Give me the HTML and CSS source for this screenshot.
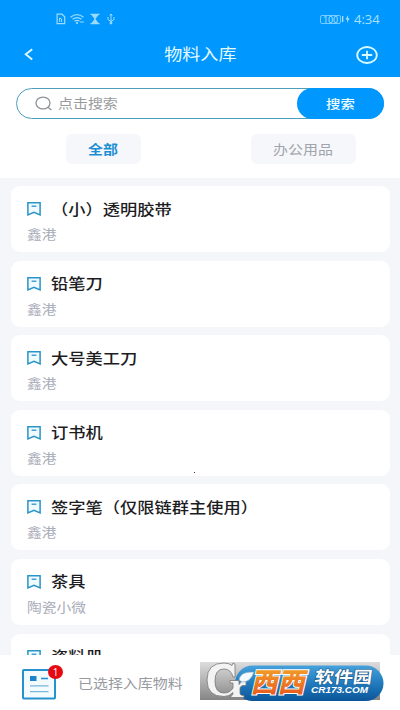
FILE: index.html
```html
<!DOCTYPE html>
<html lang="zh-CN">
<head>
<meta charset="utf-8">
<title>物料入库</title>
<link rel="stylesheet" href="styles.css">
</head>
<body>
<svg class="defs" width="0" height="0" aria-hidden="true">
  <symbol id="bookmark" viewBox="0 0 14 14"><path d="M.9.8h12.2v12.1L7 10.2.9 12.9z" fill="#f0faff" stroke="#2795c8" stroke-width="1.5"/><path d="M4.6 4.2h4.8" stroke="#2795c8" stroke-width="1.3"/></symbol>
</svg>
<div class="app">
  <header class="top">
    <div class="status">
      <svg class="status-icons" width="62" height="12" viewBox="0 0 62 12" fill="none" stroke="#9bdcff">
        <path d="M1.1 1.2h5l2.6 2.5v7H1.1z" stroke-width="1.2"/><path d="M3.6 9V5l2 1v3"/>
        <path d="M14.5 4.2q6.5-5 13 0M16.5 6.3q4.6-3.4 9 0M18.5 8.3q2.6-1.8 5 0" stroke-width="1.2"/><circle cx="21" cy="10" r=".7" fill="#9bdcff"/><path d="M24 9h4"/>
        <path d="M34.5 1.4h9M34.5 10.6h9" stroke-width="1.2"/><path d="M36 2h6l-3 4zM39 6l3 4h-6z" fill="#9bdcff" stroke-width=".8"/>
        <path d="M55 1v10M52 4v2.5l3 2 3-2V4"/><path d="M53.8 2.5 55 1l1.2 1.5"/><circle cx="55" cy="10" r="1" fill="#9bdcff"/>
      </svg>
      <div class="status-right">
        <span class="battery">100</span>
        <svg width="8" height="10" viewBox="0 0 8 10" fill="#a8e1ff"><path d="M0 2h1.3v6H0zM6.2 1 3.5 5.6h1.8L5 9l2.6-4.7H5.9z"/></svg>
        <span class="clock">4:34</span>
      </div>
    </div>
    <div class="nav">
      <svg width="10" height="13" viewBox="0 0 10 13"><path d="M8.2 1.2 1.7 6.3l6.5 5.2" fill="none" stroke="#e4fbff" stroke-width="1.8"/></svg>
      <h1><span class="wide">物料入库</span></h1>
      <svg width="22" height="18" viewBox="0 0 22 18" fill="none" stroke="#d9fbff" stroke-width="1.8"><ellipse cx="11" cy="9" rx="9.8" ry="8"/><path d="M5.8 9h10.4M11 4.8v8.4"/></svg>
    </div>
  </header>
  <section class="filters">
    <div class="search">
      <svg width="18" height="15" viewBox="0 0 18 15" fill="none" stroke="#8e9296" stroke-width="1.3"><ellipse cx="8" cy="7" rx="7" ry="5.9"/><path d="m13 11.2 3.4 2.9"/></svg>
      <span class="placeholder"><span class="wide">点击搜索</span></span>
      <button><span class="wide">搜索</span></button>
    </div>
    <div class="tabs">
      <div class="tab active"><span class="wide">全部</span></div>
      <div class="tab"><span class="wide">办公用品</span></div>
    </div>
  </section>
  <main class="list">
    <article class="card"><h2><svg><use href="#bookmark"/></svg><span class="wide">（小）透明胶带</span></h2><p><span class="wide">鑫港</span></p></article>
    <article class="card"><h2><svg><use href="#bookmark"/></svg><span class="wide">铅笔刀</span></h2><p><span class="wide">鑫港</span></p></article>
    <article class="card"><h2><svg><use href="#bookmark"/></svg><span class="wide">大号美工刀</span></h2><p><span class="wide">鑫港</span></p></article>
    <article class="card"><h2><svg><use href="#bookmark"/></svg><span class="wide">订书机</span></h2><p><span class="wide">鑫港</span></p></article>
    <article class="card"><h2><svg><use href="#bookmark"/></svg><span class="wide">签字笔（仅限链群主使用）</span></h2><p><span class="wide">鑫港</span></p></article>
    <article class="card"><h2><svg><use href="#bookmark"/></svg><span class="wide">茶具</span></h2><p><span class="wide">陶瓷小微</span></p></article>
    <article class="card"><h2><svg><use href="#bookmark"/></svg><span class="wide">资料册</span></h2></article>
  </main>
  <footer class="bottom">
    <div class="cart">
      <svg width="34" height="31" viewBox="0 0 34 31" fill="none"><rect x="1" y="1" width="32" height="28.5" rx=".8" fill="#f3fbff" stroke="#2591cd" stroke-width="2"/><path d="M8 7h6.5v5H8z" fill="#1b83cc"/><path d="M19 9.5h7" stroke="#2591cd" stroke-width="1.6"/><path d="M8 16.8h18.5M8 22.7h18.5" stroke="#79b6d8" stroke-width="1.3"/></svg>
      <span class="badge">1</span>
    </div>
    <span class="chosen"><span class="wide">已选择入库物料</span></span>
  </footer>
  <i class="speck"></i>
  <svg class="watermark" width="200" height="50" viewBox="200 660 200 50">
    <defs>
      <linearGradient id="shade" x1="0" y1="0" x2="0" y2="1"><stop offset="0" stop-color="#ddd"/><stop offset="1" stop-color="#858585"/></linearGradient>
      <linearGradient id="pill" x1="0" y1="0" x2="0" y2="1"><stop offset="0" stop-color="#45a2dc"/><stop offset=".5" stop-color="#217bbd"/><stop offset="1" stop-color="#0b559a"/></linearGradient>
      <linearGradient id="tile" x1="0" y1="0" x2="0" y2="1"><stop offset="0" stop-color="#f5b52d"/><stop offset="1" stop-color="#e8501c"/></linearGradient>
    </defs>
    <path d="M200 662h180v38H200z" fill="url(#shade)"/>
    <rect x="235" y="665.5" width="148.5" height="35.5" rx="17.7" fill="url(#pill)"/>
    <path d="M235 664v13h-2q-2-8-9-8-9 0-9 12t9 12q6 0 9-5v-5h-3v-2.500h9v4q3-5 7-4v5q-4-1-6 2v6q0 2 4 2v2h-13v-2q2 0 2-2v-1q-4 4-9 4-17 0-17-16.500 0-17 17-17 5 0 8 2.500l1-2.500z" fill="#f3f3f3" stroke="#777" stroke-width=".8" stroke-linejoin="round"/>
    <path d="M239 680q1-9 15-8-3 10-12 10z" fill="#f4faff" stroke="#6f9fbd" stroke-width=".6"/>
    <text class="xixi" transform="translate(250.500 691.500) skewX(-13)" textLength="54" lengthAdjust="spacingAndGlyphs">西西</text>
    <text class="brand" transform="translate(314 682.500) skewX(-8) scale(1.16 1)">软件园</text>
    <text class="domain" x="311" y="693" textLength="57" lengthAdjust="spacingAndGlyphs">CR173.COM</text>
  </svg>
</div>
</body>
</html>
```
FILE: styles.css
```css
* { box-sizing: border-box; }
body {
  margin: 0;
  font-family: "Noto Sans CJK SC", sans-serif;
  background: #fff;
}
h1, h2, p { margin: 0; }
.defs { position: absolute; }
.app {
  position: relative;
  display: flex;
  flex-direction: column;
  width: 400px;
  height: 710px;
  overflow: hidden;
}
/* Text is drawn slightly wider than tall throughout the app. */
.wide {
  display: inline-block;
  transform: scaleX(1.15);
  transform-origin: left center;
  white-space: nowrap;
}
.top {
  flex: none;
  height: 77px;
  background: #0097ff;
  color: #e4fbff;
}
.status {
  display: flex;
  justify-content: space-between;
  height: 38px;
  padding: 13px 20px 0 56px;
}
.status-right {
  display: flex;
  align-items: center;
  gap: 1px;
  height: 12px;
  color: #a8e1ff;
  font-family: Roboto, sans-serif;
}
.battery {
  width: 21px;
  height: 9px;
  border: 1px solid #78cdff;
  border-radius: 2px;
  font-size: 9px;
  line-height: 8px;
  text-align: center;
}
.clock {
  width: 26px;
  margin-left: 3px;
  font: 13px/12px "Open Sans", sans-serif;
  white-space: nowrap;
}
.nav {
  display: flex;
  align-items: center;
  justify-content: space-between;
  height: 33px;
  padding: 0 22px 0 24px;
}
.nav h1 {
  margin: -2px 0 0 10px;
  font-size: 15.7px;
  font-weight: 400;
  line-height: 20px;
}
.nav .wide, .search button .wide, .tab .wide { transform-origin: center; }
.filters {
  flex: none;
  height: 101px;
  padding: 11px 16px 0;
}
.search {
  display: flex;
  align-items: center;
  height: 31px;
  padding-left: 18px;
  border: 1px solid #4b9fba;
  border-radius: 16px;
}
.placeholder {
  flex: 1;
  margin: -1px 0 0 5px;
  color: #999b9e;
  font-size: 13px;
  line-height: 18px;
}
.search button {
  width: 87px;
  height: 31px;
  margin-right: -1px;
  padding: 0;
  border: 0;
  border-radius: 16px;
  background: #0097ff;
  color: #edfcff;
  font: 500 12.5px/30px "Noto Sans CJK SC", sans-serif;
}
.tabs {
  display: flex;
  justify-content: space-between;
  padding: 15px 28px 0 50px;
}
.tab {
  width: 105px;
  height: 30px;
  border-radius: 6px;
  background: #f6f7fb;
  color: #a1a4ac;
  font-size: 13px;
  line-height: 30px;
  text-align: center;
}
.tab.active {
  width: 75px;
  color: #1c8fd4;
  font-weight: 700;
}
.list {
  flex: 1;
  min-height: 0;
  display: flex;
  flex-direction: column;
  gap: 8.6px;
  padding: 8px 10px 0 10.5px;
  overflow: hidden;
  background: #f5f6fa;
}
.card {
  flex: none;
  height: 66px;
  padding: 13px 16px 0;
  border-radius: 9px;
  background: #fff;
}
.card h2 {
  display: flex;
  align-items: center;
  height: 20px;
  color: #1d1d1f;
  font-size: 15px;
  font-weight: 500;
  line-height: 20px;
}
.card h2 svg {
  width: 14px;
  height: 14px;
  margin-right: 10.5px;
}
.card h2 .wide { margin-top: -1px; }
.card p {
  margin-top: 6px;
  color: #a9abb9;
  font-size: 12.8px;
  line-height: 18px;
}
.bottom {
  flex: none;
  display: flex;
  align-items: center;
  height: 55px;
  padding: 0 22px;
  background: #fff;
}
.cart {
  position: relative;
  width: 34px;
  height: 31px;
  margin-top: 3px;
}
.badge {
  position: absolute;
  top: -4px;
  left: 26px;
  width: 15px;
  height: 14px;
  border-radius: 50%;
  background: #e50912;
  color: #fff;
  font: 10px/14px "Open Sans", sans-serif;
  text-align: center;
}
.chosen {
  margin-left: 22px;
  color: #96999e;
  font-size: 13px;
  line-height: 18px;
}
.speck {
  position: absolute;
  top: 472px;
  left: 194px;
  width: 1px;
  height: 1px;
  background: #542d35;
}
.watermark {
  position: absolute;
  right: 0;
  bottom: 0;
}
.xixi {
  fill: url(#tile);
  stroke: #fff;
  stroke-width: 2px;
  paint-order: stroke;
  font-size: 27px;
  font-weight: 900;
}
.brand {
  fill: #fff;
  stroke: #1a5486;
  stroke-width: 1px;
  paint-order: stroke;
  font-size: 16.5px;
  font-weight: 700;
}
.domain {
  fill: #fff;
  font: italic 700 9.5px "Liberation Sans", sans-serif;
}
```
